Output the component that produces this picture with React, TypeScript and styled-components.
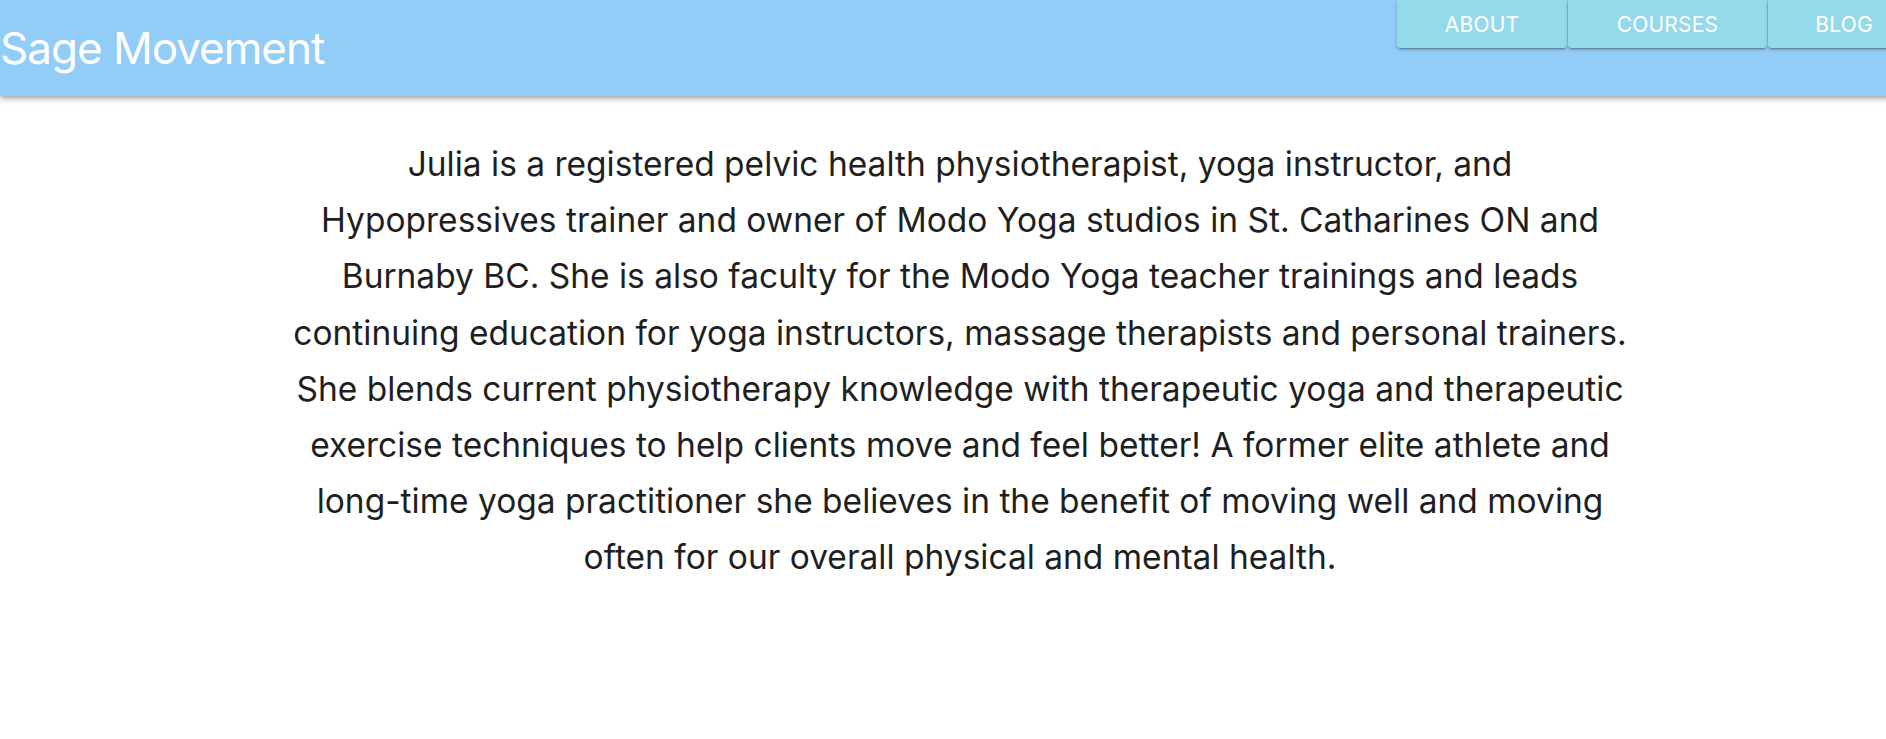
import React from "react";
import styled, { createGlobalStyle } from "styled-components";

const GlobalStyle = createGlobalStyle`
  html, body {
    margin: 0;
    padding: 0;
    overflow: hidden;
    background: #ffffff;
  }
  body {
    font-family: Inter, "Noto Sans", "Liberation Sans", sans-serif;
  }
`;

const Page = styled.div`
  width: 1920px;
  min-height: 739px;
  background: #ffffff;
`;

const AppBar = styled.header`
  height: 96px;
  background: #91cdf7;
  display: flex;
  justify-content: space-between;
  align-items: flex-start;
  box-shadow: 0 2px 4px -1px rgba(0, 0, 0, 0.2), 0 4px 5px 0 rgba(0, 0, 0, 0.14),
    0 1px 10px 0 rgba(0, 0, 0, 0.12);
  position: relative;
  z-index: 1;
`;

const Title = styled.h1`
  margin: 0;
  align-self: center;
  font-family: Inter, "Noto Sans", sans-serif;
  font-weight: 400;
  font-size: 44px;
  letter-spacing: -1px;
  line-height: 56px;
  color: #ffffff;
`;

const Nav = styled.nav`
  display: flex;
  gap: 1px;
`;

const NavButton = styled.button<{ $width: number }>`
  width: ${(p) => p.$width}px;
  height: 48px;
  border: none;
  border-radius: 0 0 4px 4px;
  background: #95daea;
  color: #ffffff;
  font-family: Inter, "Noto Sans", sans-serif;
  font-size: 21px;
  font-weight: 400;
  letter-spacing: 0.2px;
  text-transform: uppercase;
  cursor: pointer;
  box-shadow: 0 3px 1px -2px rgba(0, 0, 0, 0.2), 0 2px 2px 0 rgba(0, 0, 0, 0.14),
    0 1px 5px 0 rgba(0, 0, 0, 0.12);
`;

const Main = styled.main`
  display: flex;
  justify-content: center;
  padding-top: 40px;
`;

const Bio = styled.p`
  margin: 0;
  width: 1440px;
  text-align: center;
  font-family: Inter, "Noto Sans", sans-serif;
  font-size: 33.5px;
  letter-spacing: 0;
  line-height: 56.2px;
  color: #1f1f1f;
`;

const lines = [
  "Julia is a registered pelvic health physiotherapist, yoga instructor, and",
  "Hypopressives trainer and owner of Modo Yoga studios in St. Catharines ON and",
  "Burnaby BC. She is also faculty for the Modo Yoga teacher trainings and leads",
  "continuing education for yoga instructors, massage therapists and personal trainers.",
  "She blends current physiotherapy knowledge with therapeutic yoga and therapeutic",
  "exercise techniques to help clients move and feel better! A former elite athlete and",
  "long-time yoga practitioner she believes in the benefit of moving well and moving",
  "often for our overall physical and mental health.",
];

export default function App() {
  return (
    <>
      <GlobalStyle />
      <Page>
        <AppBar>
          <Title>Sage Movement</Title>
          <Nav>
            <NavButton $width={170}>About</NavButton>
            <NavButton $width={199}>Courses</NavButton>
            <NavButton $width={152}>Blog</NavButton>
          </Nav>
        </AppBar>
        <Main>
          <Bio>
            {lines.map((l, i) => (
              <React.Fragment key={i}>
                {l}
                {i < lines.length - 1 && <br />}
              </React.Fragment>
            ))}
          </Bio>
        </Main>
      </Page>
    </>
  );
}
